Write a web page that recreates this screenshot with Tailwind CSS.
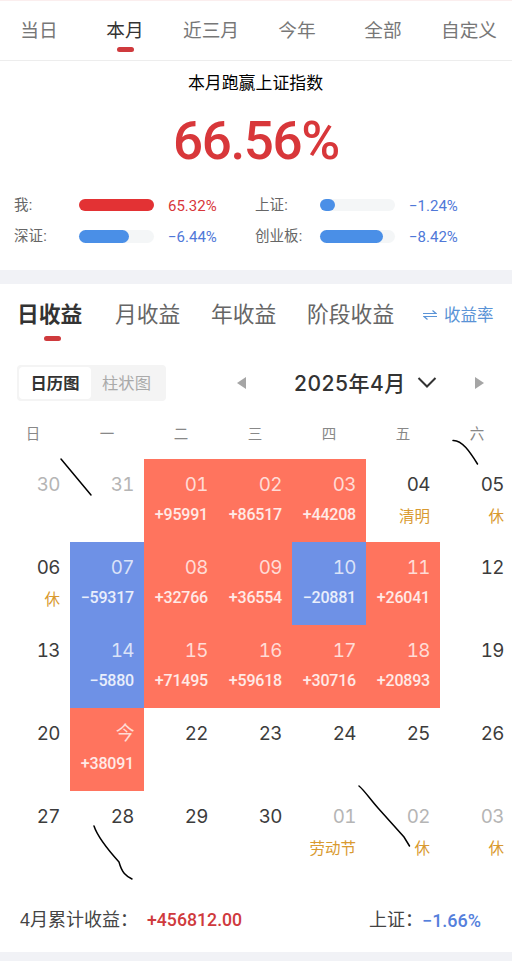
<!DOCTYPE html>
<html lang="zh-CN">
  <head>
    <meta charset="UTF-8" />
    <title>收益日历</title>
    <meta name="viewport" content="width=device-width, initial-scale=1" />
    <script src="https://cdn.jsdelivr.net/npm/@tailwindcss/browser@4"></script>
  </head>
  <body
    class="relative h-[961px] w-[512px] overflow-hidden bg-white font-['Liberation_Sans','Noto_Sans_CJK_SC',sans-serif] text-[#333] whitespace-nowrap"
  >
    <!-- Period tabs -->
    <nav
      class="-ml-1 grid h-[61px] w-[516px] grid-cols-6 border-t border-b border-t-[#fbeeee] border-b-[#ededed] text-center text-[18.7px] leading-[60px] text-[#777]"
    >
      <a>当日</a>
      <a class="relative text-[#333]"
        >本月<span
          class="absolute top-[46px] left-[35px] h-[5px] w-[17px] rounded-sm bg-[#cf3a3d]"
        ></span
      ></a>
      <a>近三月</a>
      <a>今年</a>
      <a>全部</a>
      <a>自定义</a>
    </nav>

    <!-- Summary -->
    <section class="h-[209px]">
      <h1 class="h-[42px] pr-px text-center text-[16.9px] leading-[46px] text-black">
        本月跑赢上证指数
      </h1>
      <div
        class="h-[86px] text-center font-[Roboto] text-[53px] leading-[77px] font-medium tracking-[-1.4px] text-[#d8373a]"
      >
        66.56%
      </div>
      <div
        class="grid grid-cols-[65px_89px_87px_65px_89px_1fr] auto-rows-[31.5px] items-center pl-3.5 text-[14.5px] text-[#666]"
      >
        <span class="pt-0.5">我:</span>
        <div class="h-[12.5px] w-[75px] rounded-full bg-[#f4f6f7]">
          <div class="h-full rounded-full bg-[#e33234]" style="width: 100%"></div>
        </div>
        <span class="pt-0.5 font-[Roboto] text-[15px] text-[#d8373a]">65.32%</span>
        <span class="pt-0.5">上证:</span>
        <div class="h-[12.5px] w-[75px] rounded-full bg-[#f4f6f7]">
          <div class="h-full rounded-full bg-[#4a8fe7]" style="width: 20%"></div>
        </div>
        <span class="pt-0.5 font-[Roboto] text-[15px] text-[#5078d8]">−1.24%</span>
        <span class="pt-0.5">深证:</span>
        <div class="h-[12.5px] w-[75px] rounded-full bg-[#f4f6f7]">
          <div class="h-full rounded-full bg-[#4a8fe7]" style="width: 66%"></div>
        </div>
        <span class="pt-0.5 font-[Roboto] text-[15px] text-[#5078d8]">−6.44%</span>
        <span class="pt-0.5">创业板:</span>
        <div class="h-[12.5px] w-[75px] rounded-full bg-[#f4f6f7]">
          <div class="h-full rounded-full bg-[#4a8fe7]" style="width: 84%"></div>
        </div>
        <span class="pt-0.5 font-[Roboto] text-[15px] text-[#5078d8]">−8.42%</span>
      </div>
    </section>

    <div class="h-3.5 bg-[#f1f2f6]"></div>

    <!-- Income tabs -->
    <div class="flex h-[73px] pl-[17px] text-[21.8px] leading-[62px] text-[#666]">
      <a class="relative w-[98px] font-bold text-[#333]"
        >日收益<span
          class="absolute top-[52px] left-[27px] h-[4.5px] w-[17px] rounded-sm bg-[#cf3a3d]"
        ></span
      ></a>
      <a class="w-24">月收益</a>
      <a class="w-24">年收益</a>
      <a class="w-[116px]">阶段收益</a>
      <a class="flex items-center gap-[7px] self-start text-[16.5px] text-[#5a93d6]">
        <svg width="14" height="12" viewBox="0 0 14 12" fill="none" stroke="currentColor" stroke-width="1.2">
          <path d="M0 4.500H13L9.500 1.500M14 7.500H1L4.500 10.500" />
        </svg>
        收益率
      </a>
    </div>

    <!-- Chart switch and month picker -->
    <div class="flex h-[52px] items-center pl-[17px]">
      <div
        class="flex h-9 w-[149px] items-center rounded-sm bg-[#f4f4f4] p-0.5 text-center text-[16.3px] leading-8"
      >
        <span class="h-8 w-[72px] rounded-sm bg-white font-bold text-[#333]">日历图</span>
        <span class="flex-1 pr-0.5 text-[#aaa]">柱状图</span>
      </div>
      <svg class="ml-[70px]" width="11" height="12" viewBox="0 0 11 12">
        <path d="M10 0V12L1 6Z" fill="#a5a5a5" />
      </svg>
      <span
        class="ml-[47px] w-[123px] pt-0.5 font-['Inter','Noto_Sans_CJK_SC',sans-serif] text-[21px] font-medium tracking-[0.5px]"
        >2025年4月</span
      >
      <svg width="20" height="12" viewBox="0 0 20 12" fill="none" stroke="#333" stroke-width="2">
        <path d="M1.500 1L10 9.500L18.500 1" />
      </svg>
      <svg class="ml-[37px]" width="11" height="12" viewBox="0 0 11 12">
        <path d="M1 0V12L10 6Z" fill="#a5a5a5" />
      </svg>
    </div>

    <!-- Calendar -->
    <div
      class="-ml-1 grid h-[50px] w-[518px] grid-cols-7 text-center text-[14.5px] leading-[50px] text-[#888]"
    >
      <span>日</span><span>一</span><span>二</span><span>三</span><span>四</span
      ><span>五</span><span>六</span>
    </div>
    <div id="calendar" class="-ml-1 grid w-[518px] auto-rows-[83px] grid-cols-7"></div>

    <!-- Totals -->
    <footer class="flex h-[77.5px] items-center pt-4 pl-5 text-[18px] text-[#444]">
      <span class="w-[127px]">4月累计收益：</span>
      <span class="w-[222px] font-[Roboto] text-[17.7px] font-medium text-[#cf3a3d]"
        >+456812.00</span
      >
      <span class="w-[53px]">上证：</span>
      <span class="font-[Roboto] text-[18px] font-medium text-[#5580dc]">−1.66%</span>
    </footer>
    <div class="h-2.5 bg-[#f1f2f6]"></div>

    <!-- Pen strokes -->
    <svg
      class="absolute top-0 left-0"
      width="512"
      height="961"
      viewBox="0 0 512 961"
      fill="none"
      stroke="#000"
      stroke-width="1.5"
      stroke-linecap="round"
    >
      <path d="M61 459L91 495" />
      <path d="M453 440.500C462 440 470 452 477.500 464" />
      <path d="M94 826C98 838 110 852 119 862C122 873 126 876 132 879" />
      <path d="M359 786C364 790 370 799 378 808L404 837L409.500 846" />
    </svg>

    <script>
      // [day, label]; signed labels are gains and losses, others are holidays
      const days = [
        ["30", ""], ["31", ""], ["01", "+95991"], ["02", "+86517"], ["03", "+44208"], ["04", "清明"], ["05", "休"],
        ["06", "休"], ["07", "−59317"], ["08", "+32766"], ["09", "+36554"], ["10", "−20881"], ["11", "+26041"], ["12", ""],
        ["13", ""], ["14", "−5880"], ["15", "+71495"], ["16", "+59618"], ["17", "+30716"], ["18", "+20893"], ["19", ""],
        ["20", ""], ["今", "+38091"], ["22", ""], ["23", ""], ["24", ""], ["25", ""], ["26", ""],
        ["27", ""], ["28", ""], ["29", ""], ["30", ""], ["01", "劳动节"], ["02", "休"], ["03", "休"],
      ];

      let output = "";
      days.forEach(([day, label], i) => {
        const outside = i < 2 || i > 31;
        let cell = outside ? "text-[#b5b5b5]" : "text-[#3c3c3c]";
        let note = "text-[15.5px] leading-[36px] text-[#d99a30]";
        if (label[0] === "+") cell = "bg-[#ff745e] text-white/75";
        if (label[0] === "−") cell = "bg-[#6e91e6] text-white/75";
        if (label[0] === "+" || label[0] === "−") {
          note = "font-[Roboto] text-[16px] leading-[32px] font-medium tracking-[-0.2px] text-white/85";
        }
        output += `
          <div class="pt-2.5 pr-2.5 text-right ${cell}">
            <div class="h-[30px] font-['Inter','Noto_Sans_CJK_SC',sans-serif] text-[18.8px] leading-[32px] tracking-[-0.5px] tabular-nums">${day}</div>
            <div class="${note}">${label}</div>
          </div>`;
      });
      document.getElementById("calendar").innerHTML = output;
    </script>
  </body>
</html>
